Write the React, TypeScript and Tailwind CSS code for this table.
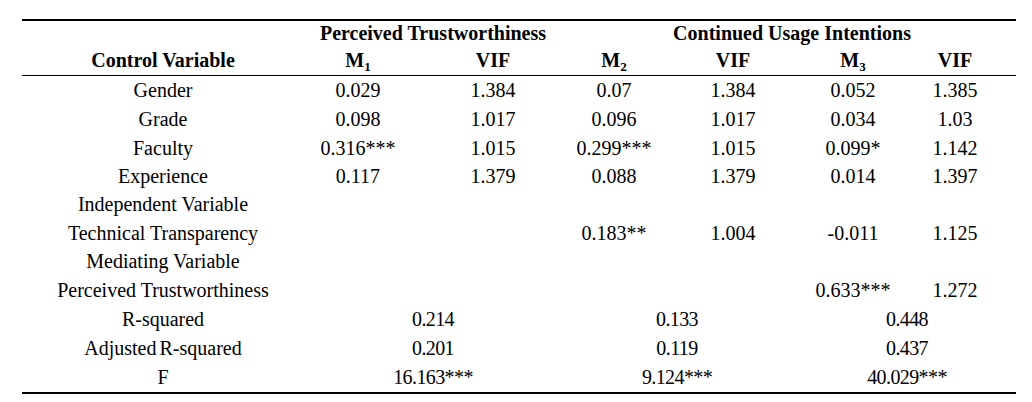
import React from 'react';

type Row = { label: string; h: string; cells?: string[]; wide?: string[] };

const rows: Row[] = [
  { label: 'Gender', h: 'h-[29px]', cells: ['0.029', '1.384', '0.07', '1.384', '0.052', '1.385'] },
  { label: 'Grade', h: 'h-[29px]', cells: ['0.098', '1.017', '0.096', '1.017', '0.034', '1.03'] },
  { label: 'Faculty', h: 'h-[29px]', cells: ['0.316***', '1.015', '0.299***', '1.015', '0.099*', '1.142'] },
  { label: 'Experience', h: 'h-[28px]', cells: ['0.117', '1.379', '0.088', '1.379', '0.014', '1.397'] },
  { label: 'Independent Variable', h: 'h-[28px]', cells: ['', '', '', '', '', ''] },
  { label: 'Technical Transparency', h: 'h-[29px]', cells: ['', '', '0.183**', '1.004', '-0.011', '1.125'] },
  { label: 'Mediating Variable', h: 'h-[28px]', cells: ['', '', '', '', '', ''] },
  { label: 'Perceived Trustworthiness', h: 'h-[29px]', cells: ['', '', '', '', '0.633***', '1.272'] },
  { label: 'R-squared', h: 'h-[29px]', wide: ['0.214', '0.133', '0.448'] },
  { label: 'Adjusted R-squared', h: 'h-[29px]', wide: ['0.201', '0.119', '0.437'] },
  { label: 'F', h: 'h-[31px]', wide: ['16.163***', '9.124***', '40.029***'] },
];

const wideCls = ['text-center tracking-[-0.6px]', 'text-center pr-[20px] tracking-[-0.6px]', 'text-center pr-[8px] tracking-[-0.6px]'];

const Sub = ({ n }: { n: string }) => (
  <span className="relative top-[4px] text-[13px] leading-none">{n}</span>
);

export default function App() {
  return (
    <div className="w-[1032px] h-[402px] bg-white pt-[19px] pl-[22px] text-black text-[20px] leading-[20px] font-[family-name:'Liberation_Serif',serif]">
      <table className="w-[994px] table-fixed border-collapse border-t-[2px] border-b-[2px] border-black">
        <colgroup>
          <col className="w-[276px]" />
          <col className="w-[120px]" />
          <col className="w-[150px]" />
          <col className="w-[92px]" />
          <col className="w-[146px]" />
          <col className="w-[94px]" />
          <col className="w-[116px]" />
        </colgroup>
        <thead className="font-bold">
          <tr className="h-[27px]">
            <th></th>
            <th colSpan={2} className="text-center font-bold pb-[2px]">Perceived Trustworthiness</th>
            <th colSpan={4} className="text-center font-bold pb-[2px]">Continued Usage Intentions</th>
          </tr>
          <tr className="h-[28px] border-b border-black">
            <th className="text-center font-bold pl-[6px] pb-[2px]">Control Variable</th>
            <th className="text-center font-bold pb-[2px]">M<Sub n="1" /></th>
            <th className="text-center font-bold pb-[2px]">VIF</th>
            <th className="text-center font-bold pb-[2px]">M<Sub n="2" /></th>
            <th className="text-center font-bold pb-[2px]">VIF</th>
            <th className="text-center font-bold pb-[2px]">M<Sub n="3" /></th>
            <th className="text-center font-bold pr-[6px] pb-[2px]">VIF</th>
          </tr>
        </thead>
        <tbody>
          {rows.map((r) => (
            <tr key={r.label} className={r.h}>
              <td className={r.wide ? 'text-center pl-[6px] [word-spacing:-2px]' : 'text-center pl-[6px]'}>{r.label}</td>
              {r.cells &&
                r.cells.map((c, i) => (
                  <td key={i} className={i === 5 ? 'text-center pr-[6px]' : 'text-center'}>{c}</td>
                ))}
              {r.wide &&
                r.wide.map((c, i) => (
                  <td key={i} colSpan={2} className={i === 2 ? `${wideCls[i]}` : wideCls[i]}>
                    {c}
                  </td>
                ))}
            </tr>
          ))}
        </tbody>
      </table>
    </div>
  );
}
